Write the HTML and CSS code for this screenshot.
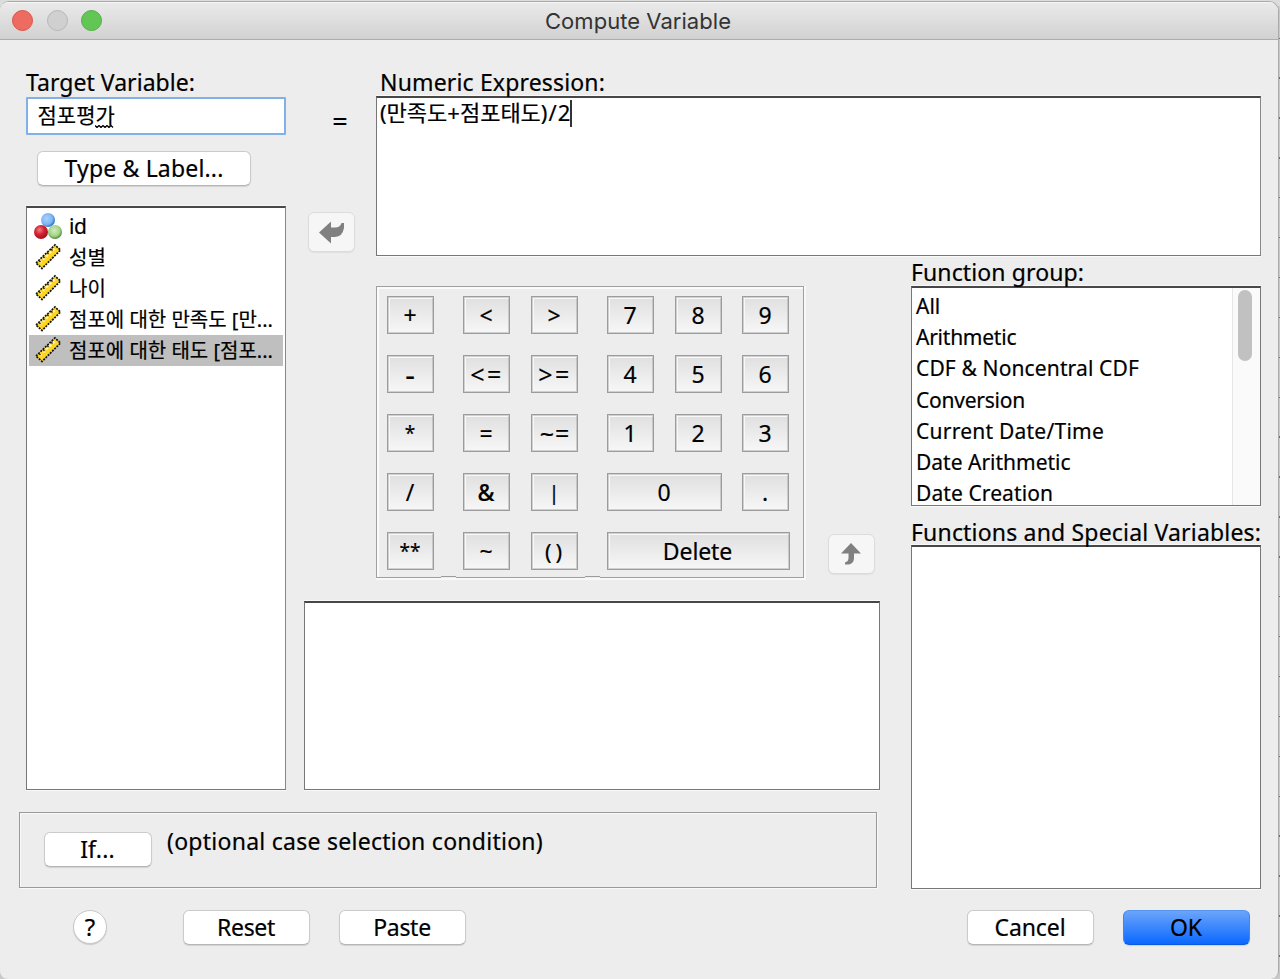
FILE: index.html
```
<!DOCTYPE html>
<html lang="ko">
<head>
<meta charset="utf-8">
<title>Compute Variable</title>
<link rel="stylesheet" href="styles.css">
</head>
<body>
<svg class="defs" width="0" height="0" aria-hidden="true">
  <defs>
    <radialGradient id="blue" cx=".4" cy=".4" r=".6"><stop offset="0" stop-color="#a9d2fb"/><stop offset=".7" stop-color="#7db5f2"/><stop offset="1" stop-color="#2f78cc"/></radialGradient>
    <radialGradient id="red" cx=".4" cy=".35" r=".65"><stop offset="0" stop-color="#f08080"/><stop offset=".5" stop-color="#d32434"/><stop offset="1" stop-color="#a80f1c"/></radialGradient>
    <radialGradient id="green" cx=".45" cy=".4" r=".6"><stop offset="0" stop-color="#d2ecbc"/><stop offset=".65" stop-color="#a4d288"/><stop offset="1" stop-color="#4d8a35"/></radialGradient>
    <symbol id="ruler" viewBox="0 0 28 28">
      <path d="M2 20 21 2 26.500 7 8 25.500Z" fill="#ffd61f"/>
      <path d="M5.500 19.500 21 5" stroke="#fff6a8" stroke-width="2.500" stroke-dasharray="2.500 2"/>
      <path d="M2 20 21 2 26.500 7 8 25.500Z" fill="none" stroke="#111" stroke-width="1.700" stroke-dasharray="2 1.100"/>
      <path d="M5 17.500l1.500 1.500M9 13.500l1.500 1.500M13 9.500l1.500 1.500M17 6l1.500 1.500" stroke="#222" stroke-width="1.400"/>
    </symbol>
    <symbol id="nominal" viewBox="0 0 28 28">
      <circle cx="14" cy="8" r="7" fill="url(#blue)"/>
      <circle cx="7" cy="20" r="7" fill="url(#red)"/>
      <circle cx="21" cy="20" r="7" fill="url(#green)"/>
    </symbol>
  </defs>
</svg>
<div class="window">
  <header class="titlebar">
    <div class="lights"><i class="light close"></i><i class="light min"></i><i class="light max"></i></div>
    <h1 class="title">Compute Variable</h1>
  </header>

  <main class="content">
    <section class="left">
      <label class="label target-label">Target Variable:</label>
      <div class="field">점포평<span class="composing">가<svg width="19" height="3" viewBox="0 0 19 3"><path d="M0 .5 2 2.5 4 .5 6 2.5 8 .5 10 2.5 12 .5 14 2.5 16 .5 18 2.5" fill="none" stroke="#000" stroke-width="1.300"/></svg></span></div>
      <button class="btn type-btn">Type &amp; Label...</button>
      <ul class="box vars">
        <li><svg class="ico"><use href="#nominal"/></svg><span class="id">id</span></li>
        <li><svg class="ico"><use href="#ruler"/></svg><span>성별</span></li>
        <li><svg class="ico"><use href="#ruler"/></svg><span>나이</span></li>
        <li><svg class="ico"><use href="#ruler"/></svg><span>점포에 대한 만족도 [만...</span></li>
        <li class="selected"><svg class="ico"><use href="#ruler"/></svg><span>점포에 대한 태도 [점포...</span></li>
      </ul>
    </section>

    <section class="expression">
      <div class="bridge">
        <span class="equals">=</span>
        <button class="arrow"><svg width="26" height="24" viewBox="0 0 26 24"><path d="M0 12.500 12 1.500V7.500H16Q21 7.500 22.500 3H25V8Q23.500 16.500 16 17H12V23.500Z" fill="#808080"/></svg></button>
      </div>
      <div class="expr-col">
        <label class="label numeric-label">Numeric Expression:</label>
        <div class="box expr"><span class="expr-text">(만족도+점포태도)<span class="divide">/</span>2</span><i class="caret"></i></div>
      </div>
    </section>

    <section class="middle">
      <div class="pad-row">
        <div class="keypad">
          <button>+</button><button>&lt;</button><button>&gt;</button><button>7</button><button>8</button><button>9</button>
          <button class="minus">-</button><button class="pair">&lt;=</button><button class="pair">&gt;=</button><button>4</button><button>5</button><button>6</button>
          <button class="star">*</button><button>=</button><button class="pair tilde">~=</button><button>1</button><button>2</button><button>3</button>
          <button>/</button><button class="amp">&amp;</button><button class="pipe">|</button><button class="zero">0</button><button>.</button>
          <button class="star">**</button><button>~</button><button class="parens">()</button><button class="delete">Delete</button>
          <i class="notch"></i><i class="notch second"></i>
        </div>
        <button class="arrow up"><svg width="20" height="22" viewBox="0 0 20 22"><path d="M10 0 20 10.500H13V15.500Q12.500 20.500 8 21.500H4V19.500Q7.500 18.500 7.500 15V10.500H0Z" fill="#808080"/></svg></button>
      </div>
      <div class="box description"></div>
    </section>

    <section class="functions">
      <label class="label group-label">Function group:</label>
      <div class="box groups">
        <ul>
          <li>All</li>
          <li class="g-arith">Arithmetic</li>
          <li class="g-cdf">CDF &amp; Noncentral CDF</li>
          <li class="g-arith">Conversion</li>
          <li class="g-cur">Current Date/Time</li>
          <li>Date Arithmetic</li>
          <li class="g-create">Date Creation</li>
        </ul>
        <div class="scroll"><i class="thumb"></i></div>
      </div>
      <label class="label special-label">Functions and Special Variables:</label>
      <div class="box special"></div>
    </section>

    <section class="ifpanel">
      <button class="btn if-btn">If...</button>
      <span class="optional">(optional case selection condition)</span>
    </section>
  </main>

  <footer class="actions">
    <button class="help">?</button>
    <button class="btn action reset">Reset</button>
    <button class="btn action paste">Paste</button>
    <button class="btn action cancel">Cancel</button>
    <button class="btn action ok">OK</button>
  </footer>
</div>
</body>
</html>
```

FILE: styles.css
```
* { box-sizing: border-box; margin: 0; padding: 0; }
body {
  width: 1280px; height: 979px; overflow: hidden;
  padding-top: 1px;
  font: 23px/24px "Noto Sans", "Noto Sans CJK KR", sans-serif;
  color: #000;
  -webkit-text-stroke: .2px;
  background: linear-gradient(#dcdcdc 0 6px, transparent 6px) 0 0 / 100% 6px no-repeat,
    repeating-linear-gradient(#c9c9c9 0 38.5px, #6f6f6f 38.5px 39.9px) 0 -1px;
}
ul { list-style: none; }
button { font: inherit; color: #000; border: 0; white-space: nowrap; }
.defs { display: block; height: 0; }
.window {
  width: 1279px; height: 978px;
  background: #ededed;
  border: solid #aaa; border-width: 1px 1px 0 0;
  border-radius: 9px 10px 8px 8px;
  overflow: hidden;
  display: flex; flex-direction: column;
}
.titlebar {
  height: 38px; flex: none;
  display: grid; grid-template-columns: 120px 1fr 122px;
  background: linear-gradient(#eaeaea, #d1d1d1);
  border-bottom: 1px solid #adadad;
  border-top: 1px solid #f5f5f5;
}
.lights { display: flex; gap: 13.5px; padding: 7px 0 0 12px; }
.light { width: 21px; height: 21px; border-radius: 50%; border: 1px solid; }
.light.close { background: #ed6b60; border-color: #d65449; }
.light.min { background: #d0d0d0; border-color: #b6b6b6; }
.light.max { background: #62c655; border-color: #4fae42; }
.title {
  font: 400 22px/37px "Inter", sans-serif; color: #333; text-align: center;
  letter-spacing: .04px;
  -webkit-text-stroke: 0;
}

.content {
  flex: none; height: 848px; padding: 30px 0 0 19px;
  display: grid;
  grid-template-columns: 285px 607px 350px;
  grid-template-rows: 186px 534px 98px;
}
.left { grid-area: 1 / 1 / 3 / 2; padding-left: 7px; display: flex; flex-direction: column; }
.expression { grid-area: 1 / 2 / 2 / 4; }
.middle { grid-area: 2 / 2; }
.functions { grid-area: 2 / 3 / 4 / 4; }
.ifpanel { grid-area: 3 / 1 / 4 / 3; }
.label { display: block; white-space: nowrap; height: 24px; line-height: 24px; }
.box {
  background: #fff;
  border: 1px solid #777; border-top: 2px solid #474747;
  box-shadow: 0 1px 0 #fafafa, 0 -1px 0 #f8f8f8;
}
.left .box, .expr-col .box { border-right-color: #888; }

.target-label { letter-spacing: .04px; margin-bottom: 3px; }
.field {
  width: 260px; height: 38px; border: 2px solid #82b1e8; border-radius: 1px;
  background: #fff; font-size: 21px; line-height: 33px; padding-left: 9.5px;
}
.composing { position: relative; }
.composing svg { position: absolute; left: 0; bottom: 1px; }
.btn {
  background: #fff; border-radius: 6px;
  border: 1px solid #cbcbcb; border-bottom-color: #b5b5b5;
  box-shadow: 0 1px 1px rgba(0, 0, 0, .12);
  line-height: 32px; padding-bottom: 1px;
}
.type-btn { width: 214px; height: 35px; margin: 16px 0 0 11px; letter-spacing: .17px; }
.vars { width: 260px; height: 584px; margin-top: 20px; padding: 3px 2px; font-size: 20px; }
.vars li { height: 31px; display: flex; align-items: center; padding-left: 5px; gap: 7px; white-space: nowrap; line-height: 31px; }
.vars li.selected { background: #bfbfbf; }
.ico { width: 28px; height: 28px; flex: none; margin-top: -2px; }
.vars .id { font-size: 21px; letter-spacing: -.3px; line-height: 29px; }

.expression { display: flex; }
.bridge { width: 72px; display: flex; flex-direction: column; align-items: flex-start; padding: 39px 0 0 4px; }
.equals { margin-left: 23px; width: 18px; text-align: center; font-size: 27px; }
.arrow {
  width: 47px; height: 40px; border-radius: 6px; background: #f6f6f6;
  border: 1px solid #dcdcdc; box-shadow: 0 1px 1px rgba(0, 0, 0, .06);
  display: flex; align-items: center; justify-content: center; flex: none;
}
.bridge .arrow { margin-top: 79px; }
.expr-col { width: 885px; }
.numeric-label { padding-left: 4px; letter-spacing: .16px; margin-bottom: 2px; }
.expr { height: 160px; padding: 2px 0 0 3px; display: flex; font-size: 22px; }
.expr-text { line-height: 25px; }
.divide { padding: 0 1px; }
.caret { width: 2px; height: 27px; background: #333; }

.pad-row { display: flex; padding: 30px 0 0 72px; align-items: flex-start; }
.keypad {
  position: relative;
  width: 428px; height: 292px; padding: 9px 0 0 10px;
  border: 1px solid #a0a0a0; box-shadow: inset 1px 1px 0 1px #fbfbfb, 1px 1px 0 1px #f8f8f8;
  background: #ededed;
  display: grid; grid-template-columns: 76px 68px 76px 68px 67px 47px;
  grid-template-rows: repeat(5, 59px);
}
.keypad button {
  width: 47px; height: 38px; line-height: 35px; padding-right: 1px;
  border: 1.5px solid #9c9c9c;
  outline: 1px solid rgba(160, 160, 160, .45); outline-offset: -2px;
  box-shadow: inset 2px 2px 0 #f8f8f8;
  background: linear-gradient(#dfdfdf, #f7f7f7);
}
.keypad button.zero { grid-column: span 2; width: 115px; }
.keypad button.delete { grid-column: span 3; width: 183px; letter-spacing: -.1px; padding-right: 2px; }
.keypad .amp { font-weight: 500; }
.keypad button.minus { font-size: 30px; line-height: 31px; }
.keypad button.parens { letter-spacing: 4px; padding-left: 3px; font-size: 22px; }
.keypad button.star { font-size: 19px; line-height: 34px; }
.keypad button.pair { font-size: 25px; letter-spacing: 2.5px; padding-left: 2px; line-height: 37px; }
.keypad button.tilde { letter-spacing: 1px; }
.keypad .pipe { font-size: 20px; }
.notch {
  position: absolute; left: 64px; bottom: -1px; width: 15px; height: 2px;
  background: #9c9c9c; border-bottom: 1px solid #ededed;
}
.notch.second { left: 208px; }
.up { margin: 248px 0 0 24px; }
.up svg { margin-right: 2px; }
.description { width: 576px; height: 189px; margin-top: 23px; }

.functions { padding-top: 5px; }
.group-label { letter-spacing: .11px; margin-bottom: 1px; line-height: 23px; }
.groups { height: 220px; display: flex; overflow: hidden; justify-content: space-between; }
.groups ul { padding: 3px 0 0 4px; font-size: 21px; }
.groups li { height: 31.2px; line-height: 31.2px; white-space: nowrap; letter-spacing: 0; }
.groups .g-arith { letter-spacing: -.24px; }
.groups .g-cdf { letter-spacing: .13px; }
.groups .g-cur { letter-spacing: .24px; }
.groups .g-create { letter-spacing: .09px; }
.scroll { width: 28px; background: #fafafa; border-left: 1px solid #e6e6e6; padding: 2px 0 0 5px; }
.thumb { display: block; width: 14px; height: 71px; border-radius: 7px; background: #c1c1c1; }
.special-label { letter-spacing: .18px; margin: 14px 0 1px; }
.special { height: 344px; }

.ifpanel {
  width: 858px; height: 76px; margin-top: 22px; display: flex; align-items: flex-start;
  border: 1px solid #999; box-shadow: inset 1px 1px 0 #fafafa, 1px 1px 0 #f8f8f8;
  padding: 19px 0 0 24px;
}
.if-btn { width: 108px; height: 35px; letter-spacing: .2px; padding-right: 1px; }
.optional { margin: -3px 0 0 15px; letter-spacing: .26px; white-space: nowrap; line-height: 24px; }

.actions { flex: 1; display: flex; align-items: flex-start; padding: 22px 0 0 73px; }
.help {
  width: 34px; height: 34px; border-radius: 50%; background: #fff;
  border: 1px solid #c8c8c8; box-shadow: 0 1px 1px rgba(0, 0, 0, .15);
  font-size: 24px; line-height: 32px;
}
.action { width: 127px; height: 35px; letter-spacing: -.3px; padding-right: 1px; }
.reset { margin-left: 76px; }
.paste { margin-left: 29px; }
.cancel { margin-left: 501px; letter-spacing: -.1px; }
.ok {
  margin-left: 29px; letter-spacing: -.1px;
  background: linear-gradient(#6ba5fa, #0a68ff);
  border-color: #5493ee #3f86f4 #0a5be0;
}
```
